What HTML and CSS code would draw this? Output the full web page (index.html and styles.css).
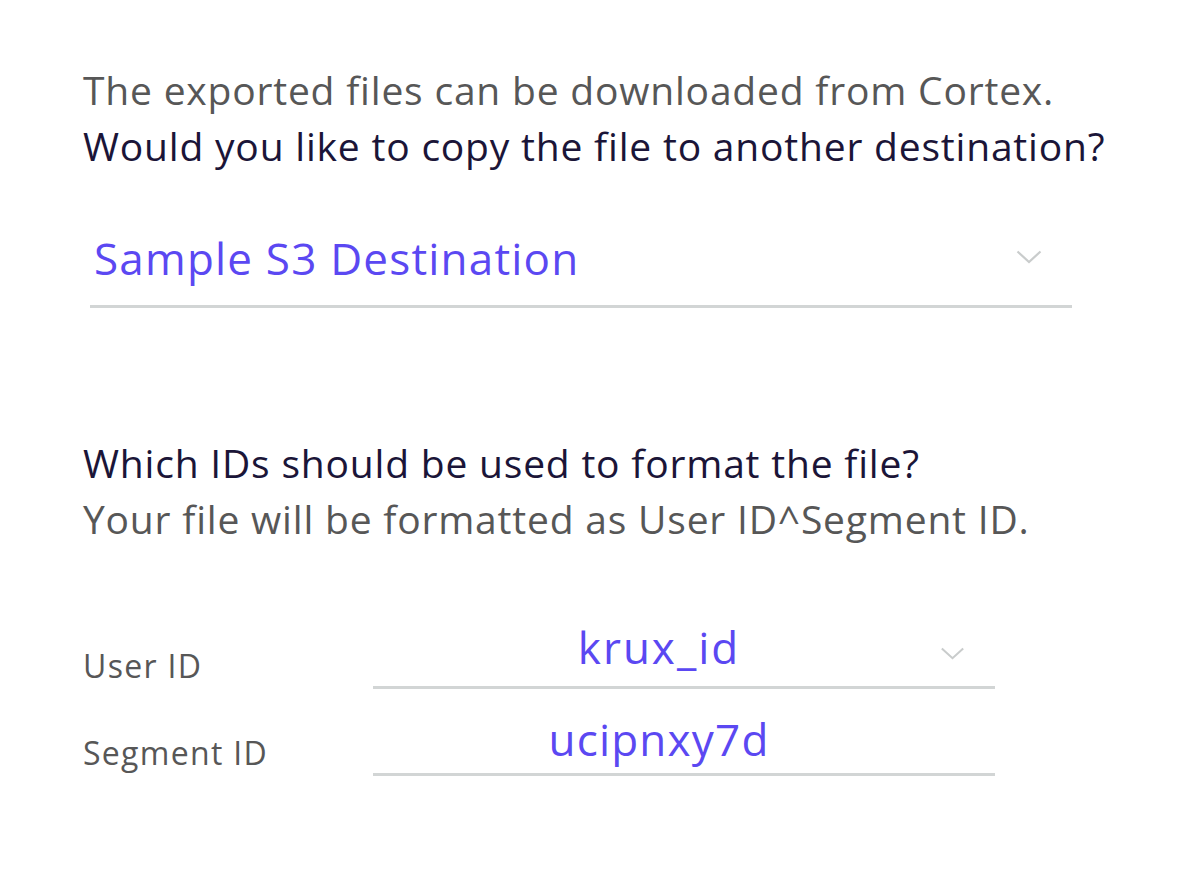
FILE: index.html
```html
<html lang="en">
  <head>
    <meta name="viewport" content="width=device-width, initial-scale=1" />
    <title>Export destination</title>
    <link rel="stylesheet" href="styles.css">
  </head>
  <body>
    <div class="export-panel">
      <div class="intro">
        <p class="note">The exported files can be downloaded from Cortex.</p>
        <p class="question">Would you like to copy the file to another destination?</p>
      </div>

      <div class="dest-select">
        <span class="dest-value">Sample S3 Destination</span>
        <svg class="chevron" viewBox="0 0 26 14" width="26" height="14">
          <path d="M1.5 1.5 L13 12 L24.5 1.5" fill="none" stroke="#c9cccc" stroke-width="2.2" />
        </svg>
      </div>

      <div class="ids">
        <p class="question">Which IDs should be used to format the file?</p>
        <p class="note">Your file will be formatted as User ID^Segment ID.</p>
      </div>

      <div class="id-rows">
        <div class="id-row">
          <span class="id-label">User ID</span>
          <div class="id-field">
            <span class="id-value select">krux_id</span>
            <svg class="chevron small" viewBox="0 0 26 14" width="25" height="13">
              <path d="M1.5 1.5 L13 12 L24.5 1.5" fill="none" stroke="#c9cccc" stroke-width="2.2" />
            </svg>
          </div>
        </div>
        <div class="id-row">
          <span class="id-label">Segment ID</span>
          <div class="id-field">
            <span class="id-value">ucipnxy7d</span>
          </div>
        </div>
      </div>
    </div>
  </body>
</html>
```

FILE: styles.css
```css
body {
  margin: 0;
  background-color: #fff;
  font-family: "Open Sans", "Noto Sans", sans-serif;
}
p {
  margin: 0;
}
.export-panel {
  padding: 62px 0 0 83px;
  width: 1050px;
}
.intro,
.ids {
  font-size: 39px;
  line-height: 56px;
  letter-spacing: 0.8px;
}
.note {
  color: #575757;
}
.question {
  color: #1b1538;
}
.dest-select {
  display: flex;
  align-items: center;
  justify-content: space-between;
  margin: 40px 0 0 7px;
  width: 982px;
  height: 91px;
  border-bottom: 3px solid #d2d5d5;
}
.dest-value {
  color: #5b48f2;
  font-size: 44px;
  letter-spacing: 1.2px;
  padding-left: 4px;
  padding-bottom: 4px;
}
.chevron {
  margin-right: 30px;
  margin-bottom: 6px;
}
.ids {
  margin-top: 127px;
}
.id-rows {
  margin-top: 55px;
}
.id-row {
  display: flex;
  align-items: flex-end;
  height: 87px;
}
.id-label {
  width: 290px;
  color: #575757;
  font-size: 32px;
  letter-spacing: 1.3px;
  padding-bottom: 2px;
}
.id-field {
  display: flex;
  align-items: center;
  justify-content: center;
  position: relative;
  box-sizing: border-box;
  width: 622px;
  height: 60px;
  padding-right: 50px;
  border-bottom: 3px solid #d2d5d5;
}
.id-value {
  color: #5b48f2;
  font-size: 44px;
  letter-spacing: 1.2px;
  padding-bottom: 12px;
}
.id-value.select {
  letter-spacing: 2px;
  padding-bottom: 22px;
}
.chevron.small {
  position: absolute;
  right: 30px;
  top: 18px;
  margin: 0;
}
```
